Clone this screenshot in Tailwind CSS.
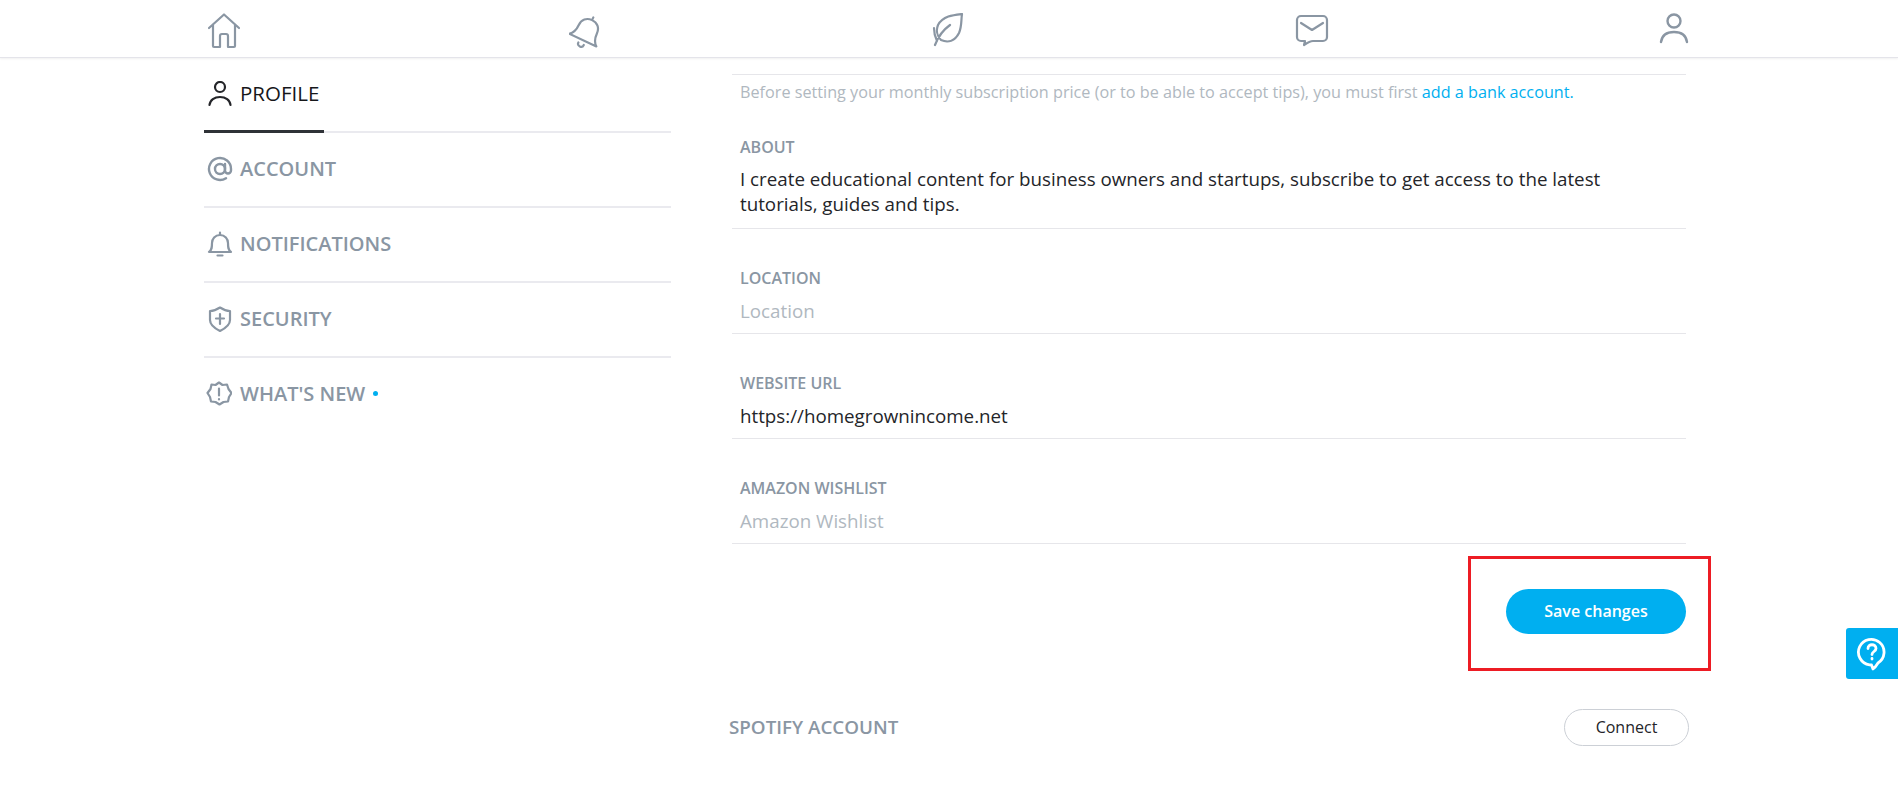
<!DOCTYPE html>
<html><head><script src="https://cdn.jsdelivr.net/npm/@tailwindcss/browser@4"></script></head>
<body class="h-[800px] overflow-hidden bg-white font-['Open_Sans',sans-serif]">
<div class="relative h-[800px] overflow-hidden">
<header class="relative z-10 h-[58px] bg-white border-b border-[#e4e4ea] shadow-[0_1px_2px_rgba(0,0,0,0.06)] flex justify-between pl-[206px] pr-[206px] pt-[5px] items-center">
<svg class="w-9 h-9" viewBox="0 0 36 36" fill="none" stroke="#8a96a3" stroke-width="2.200" stroke-linejoin="round" stroke-linecap="round"><path d="M3 15 18 1.500 33 15M7 12v21a1 1 0 0 0 1 1h6V23a2 2 0 0 1 2-2h4a2 2 0 0 1 2 2v11h6a1 1 0 0 0 1-1V12"/></svg>
<svg class="w-9 h-9" viewBox="0 0 36 36" fill="none" stroke="#8a96a3" stroke-width="2.200" stroke-linejoin="round" stroke-linecap="round"><g transform="rotate(25 18 18)"><path d="M3 28h30c-4-3-5-6-5-12 0-6-4-10-10-10S8 10 8 16c0 6-1 9-5 12zM18 3v3M15 32a3 3 0 0 0 6 0"/></g></svg>
<svg class="w-9 h-9" viewBox="0 0 36 36" fill="none" stroke="#8a96a3" stroke-width="2.200" stroke-linejoin="round" stroke-linecap="round"><path d="M31 1C22 2 12 3 7 12c-2 5-1 11 3 15 7 3 14 1 18-7 3-7 2-13 3-19zM4 32c3-8 8-15 15-20M3 15c0 5 1 9 3 13"/></svg>
<svg class="w-9 h-9" viewBox="0 0 36 36" fill="none" stroke="#8a96a3" stroke-width="2.200" stroke-linejoin="round" stroke-linecap="round"><path d="M7 3h22a4 4 0 0 1 4 4v17a4 4 0 0 1-4 4H19c-3 0-6 2-9 4l1-4H7a4 4 0 0 1-4-4V7a4 4 0 0 1 4-4zM7 10l11 7 11-7"/></svg>
<svg class="w-9 h-9" viewBox="0 0 36 36" fill="none" stroke="#8a96a3" stroke-width="2.400" stroke-linecap="round"><circle cx="18" cy="8" r="6.500"/><path d="M5 29c1-7 6-10 13-10s12 3 13 10"/></svg>
</header>
<main class="flex pl-[204px]">
<nav class="w-[467px] shrink-0 text-[20px] font-semibold text-[#8a96a3]">
<div class="h-[75px] pb-[2px] flex items-center gap-[7px] border-b-2 border-[#eaeaef] relative text-[#242529]"><svg class="w-[26px] h-[26px] ml-[3px]" viewBox="0 0 26 26" fill="none" stroke="#242529" stroke-width="2.200" stroke-linecap="round"><circle cx="13" cy="6" r="5"/><path d="M2.500 24c.5-5 5-8 10.500-8s10 3 10.500 8"/></svg><span class="font-medium text-[20.500px] text-[#16171a]">PROFILE</span><div class="absolute left-0 -bottom-[2px] h-[3px] w-[120px] bg-[#2f3237]"></div></div>
<div class="h-[75px] pb-[2px] flex items-center gap-[7px] border-b-2 border-[#eaeaef]"><svg class="w-[26px] h-[26px] ml-[3px]" viewBox="0 0 26 26" fill="none" stroke="#8a96a3" stroke-width="2.400" stroke-linecap="round"><circle cx="13" cy="13" r="5"/><path d="M18 8v6.500a3 3 0 0 0 6 0V13a11 11 0 1 0-5 9.200"/></svg><span>ACCOUNT</span></div>
<div class="h-[75px] pb-[2px] flex items-center gap-[7px] border-b-2 border-[#eaeaef]"><svg class="w-[26px] h-[26px] ml-[3px]" viewBox="0 0 26 26" fill="none" stroke="#8a96a3" stroke-width="2.200" stroke-linecap="round" stroke-linejoin="round"><path d="M2 21h22c-3-2-3-5-3-9 0-4-3-8-8-8s-8 4-8 8c0 4 0 7-3 9zM10.500 24.500h5M13 1.500V4"/></svg><span>NOTIFICATIONS</span></div>
<div class="h-[75px] pb-[2px] flex items-center gap-[7px] border-b-2 border-[#eaeaef]"><svg class="w-[26px] h-[26px] ml-[3px]" viewBox="0 0 26 26" fill="none" stroke="#8a96a3" stroke-width="2.200" stroke-linecap="round" stroke-linejoin="round"><path d="M13 1.500c3 2 7 3.500 10 3.500v9c0 5-5 8.500-10 11-5-2.500-10-6-10-11V5c3 0 7-1.500 10-3.500zM13 8v10M9 12.500h8"/></svg><span>SECURITY</span></div>
<div class="h-[75px] pb-[4px] flex items-center gap-[7px]"><svg class="w-[26px] h-[26px] ml-[2px] mr-[1px]" viewBox="0 0 26 26" fill="none" stroke="#8a96a3" stroke-width="2.200" stroke-linecap="round" stroke-linejoin="round"><path d="M13 1.500l3.500 2.500 4.500-.5 1.500 4.500 3 4-2.500 4-1 4.500-4.500.5-4 2.500-4-2.500-4.500-.5-1-4.500-2.500-4 3-4L5.500 3.500 9.500 4zM13 7.500v7M13 18v.5"/></svg><span>WHAT'S NEW</span><span class="w-[5px] h-[5px] rounded-full bg-[#00aff0] ml-[1px]"></span></div>
</nav>
<section class="w-[954px] ml-[61px] text-[#242529]">
<div class="flex h-[17px] border-b border-[#e6e6ea]"><div class="-mt-[20px] pl-[8px] text-[18.7px] leading-[26px] text-[#b0b8c0]">FREE</div></div>
<p class="text-[16.220px] leading-[24px] mt-[5px] pl-[8px] text-[#b0b8c0]">Before setting your monthly subscription price (or to be able to accept tips), you must first <span class="text-[#00aff0]">add a bank account.</span></p>
<div class="mt-[31px] border-b border-[#e6e6ea] pb-[12px] pl-[8px]"><div class="text-[16px] leading-[24px] font-semibold text-[#8a96a3]">ABOUT</div><p class="text-[18.750px] leading-[25px] mt-[7px] w-[900px]">I create educational content for business owners and startups, subscribe to get access to the latest tutorials, guides and tips.</p></div>
<div class="mt-[37px] border-b border-[#e6e6ea] pb-[9px] pl-[8px]"><div class="text-[16px] leading-[24px] font-semibold text-[#8a96a3]">LOCATION</div><div class="text-[18.750px] leading-[26px] text-[#b0b8c0] mt-[8px]">Location</div></div>
<div class="mt-[37px] border-b border-[#e6e6ea] pb-[9px] pl-[8px]"><div class="text-[16px] leading-[24px] font-semibold text-[#8a96a3]">WEBSITE URL</div><div class="text-[18.750px] leading-[26px] mt-[8px]">https://homegrownincome.net</div></div>
<div class="mt-[37px] border-b border-[#e6e6ea] pb-[9px] pl-[8px]"><div class="text-[16px] leading-[24px] font-semibold text-[#8a96a3]">AMAZON WISHLIST</div><div class="text-[18.750px] leading-[26px] text-[#b0b8c0] mt-[8px]">Amazon Wishlist</div></div>
<div class="flex justify-end mt-[45px]"><button class="w-[180px] h-[45px] pb-[2px] rounded-full bg-[#00aff0] text-white text-[16px] font-semibold">Save changes</button></div>
<div class="flex justify-between items-center mt-[75px] -ml-[3px] -mr-[3px]"><span class="text-[18.800px] font-semibold text-[#8a96a3]">SPOTIFY ACCOUNT</span><button class="w-[125px] h-[37px] pb-[2px] rounded-full border border-[#ccd0d6] text-[16px] font-medium">Connect</button></div>
</section>
</main>
<div class="absolute right-0 top-[628px] w-[52px] h-[51px] rounded-l-[3px] bg-[#00aff0] flex items-center justify-center"><svg class="w-8 h-[34px]" viewBox="0 0 32 34" fill="none" stroke="#fff" stroke-width="2.800" stroke-linecap="round" stroke-linejoin="round"><path d="M13.500 27.800A12.800 12.800 0 1 1 22 26c-1.500 2.500-3 4.500-5 6l-1.500-4zM12 11.500c0-5 8-5 8 0 0 3-4 3-4 6M16 21.500v.5"/></svg></div>
<div class="absolute left-[1468px] top-[556px] w-[243px] h-[115px] border-[3px] border-[#ed1c24]"></div>
</div>
</body></html>
